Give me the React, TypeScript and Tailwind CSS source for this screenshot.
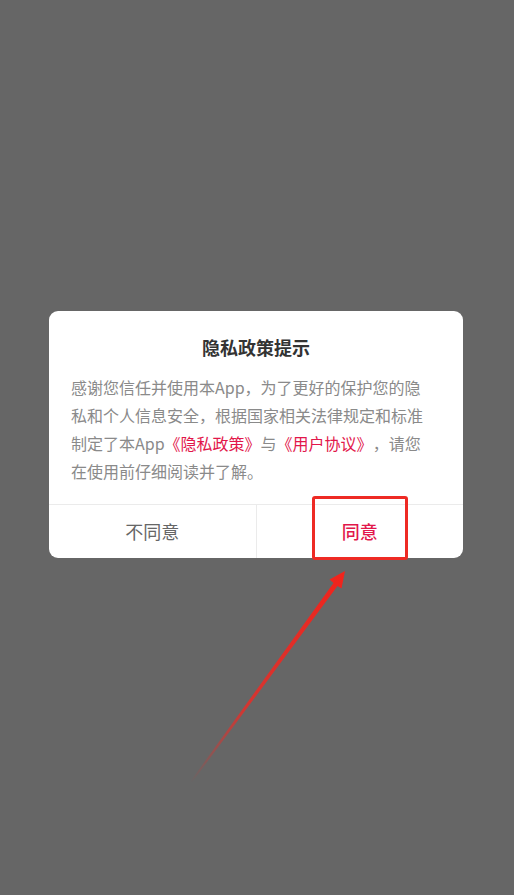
export default function App() {
  return (
    <div
      className="relative h-[895px] w-[514px] overflow-hidden bg-[#666666] pt-[311px]"
      style={{ fontFamily: '"Noto Sans CJK SC", "Noto Sans", sans-serif' }}
    >
      <div className="mx-[49px] w-[414px] overflow-hidden rounded-[9px] bg-white">
        <div className="pt-[24px] text-center text-[18px] font-bold leading-[24px] text-[#333333]">
          隐私政策提示
        </div>
        <div className="px-[22px] pb-[19px] pt-[14px] text-[16px] leading-[28px] text-[#8a8a8a] [text-spacing-trim:space-all]">
          <p className="whitespace-nowrap">感谢您信任并使用本App，为了更好的保护您的隐</p>
          <p className="whitespace-nowrap">私和个人信息安全，根据国家相关法律规定和标准</p>
          <p className="whitespace-nowrap">
            制定了本App<span className="text-[#e2174b]">《隐私政策》</span>与<span className="text-[#e2174b]">《用户协议》</span>，请您
          </p>
          <p className="whitespace-nowrap">在使用前仔细阅读并了解。</p>
        </div>
        <div className="flex h-[54px] border-t border-[#ebebeb]">
          <button className="flex flex-1 items-center justify-center border-r border-[#ebebeb] text-[18px] text-[#666666]">
            不同意
          </button>
          <button className="flex flex-1 items-center justify-center text-[18px] font-medium text-[#e2174b]">
            同意
          </button>
        </div>
      </div>

      {/* annotation */}
      <div className="absolute left-[312px] top-[496px] h-[64px] w-[96px] rounded-[3px] border-[3px] border-[#ee2a24]" />
      <svg className="absolute left-0 top-0" width="514" height="895" viewBox="0 0 514 895">
        <defs>
          <linearGradient id="arrowGrad" gradientUnits="userSpaceOnUse" x1="190" y1="782" x2="345" y2="571">
            <stop offset="0" stopColor="#ee2a24" stopOpacity="0" />
            <stop offset="0.35" stopColor="#ee2a24" stopOpacity="0.8" />
            <stop offset="1" stopColor="#f2231b" stopOpacity="1" />
          </linearGradient>
        </defs>
        <polygon
          points="190,782 333.5,583 329.5,579.5 345,571 341.5,588.5 337.5,586 191.5,783"
          fill="url(#arrowGrad)"
        />
      </svg>
    </div>
  )
}
